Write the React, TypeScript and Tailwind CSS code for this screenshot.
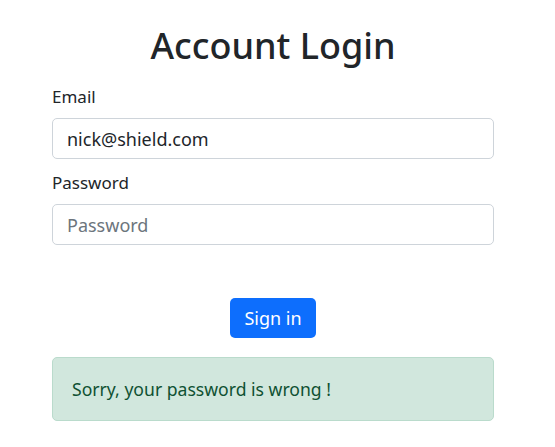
import React from "react";

// Account login card, bootstrap-ish look
const font = { fontFamily: '"Noto Sans", "Open Sans", sans-serif' };

export default function App() {
  return (
    <div className="min-h-screen bg-white text-[#212529]" style={font}>
      <div className="ml-[52px] w-[442px] pt-[18px]">
        <h1 className="text-center text-[36px] leading-[56px] font-medium">Account Login</h1>

        <div className="mt-[10px]">
          <label className="block text-[17px] leading-[26px] mb-[8px]">Email</label>
          <input
            type="email"
            defaultValue="nick@shield.com"
            className="block w-full h-[41px] rounded-[5px] border border-[#ced4da] px-[14px] text-[18px] text-[#212529] outline-none"
          />
        </div>

        <div className="mt-[11px]">
          <label className="block text-[17px] leading-[26px] mb-[8px]">Password</label>
          <input
            type="password"
            placeholder="Password"
            className="block w-full h-[41px] rounded-[5px] border border-[#ced4da] px-[14px] text-[18px] outline-none placeholder:text-[#6c757d]"
          />
        </div>

        <div className="flex justify-center mt-[53px]">
          <button className="h-[40px] w-[86px] rounded-[5px] bg-[#0d6efd] text-white text-[18px]">
            Sign in
          </button>
        </div>

        <div className="mt-[19px] h-[64px] flex items-center rounded-[5px] border border-[#badbcc] bg-[#d1e7dd] px-[19px] text-[17.6px] text-[#0f5132]">
          Sorry, your password is wrong !
        </div>
      </div>
    </div>
  );
}
